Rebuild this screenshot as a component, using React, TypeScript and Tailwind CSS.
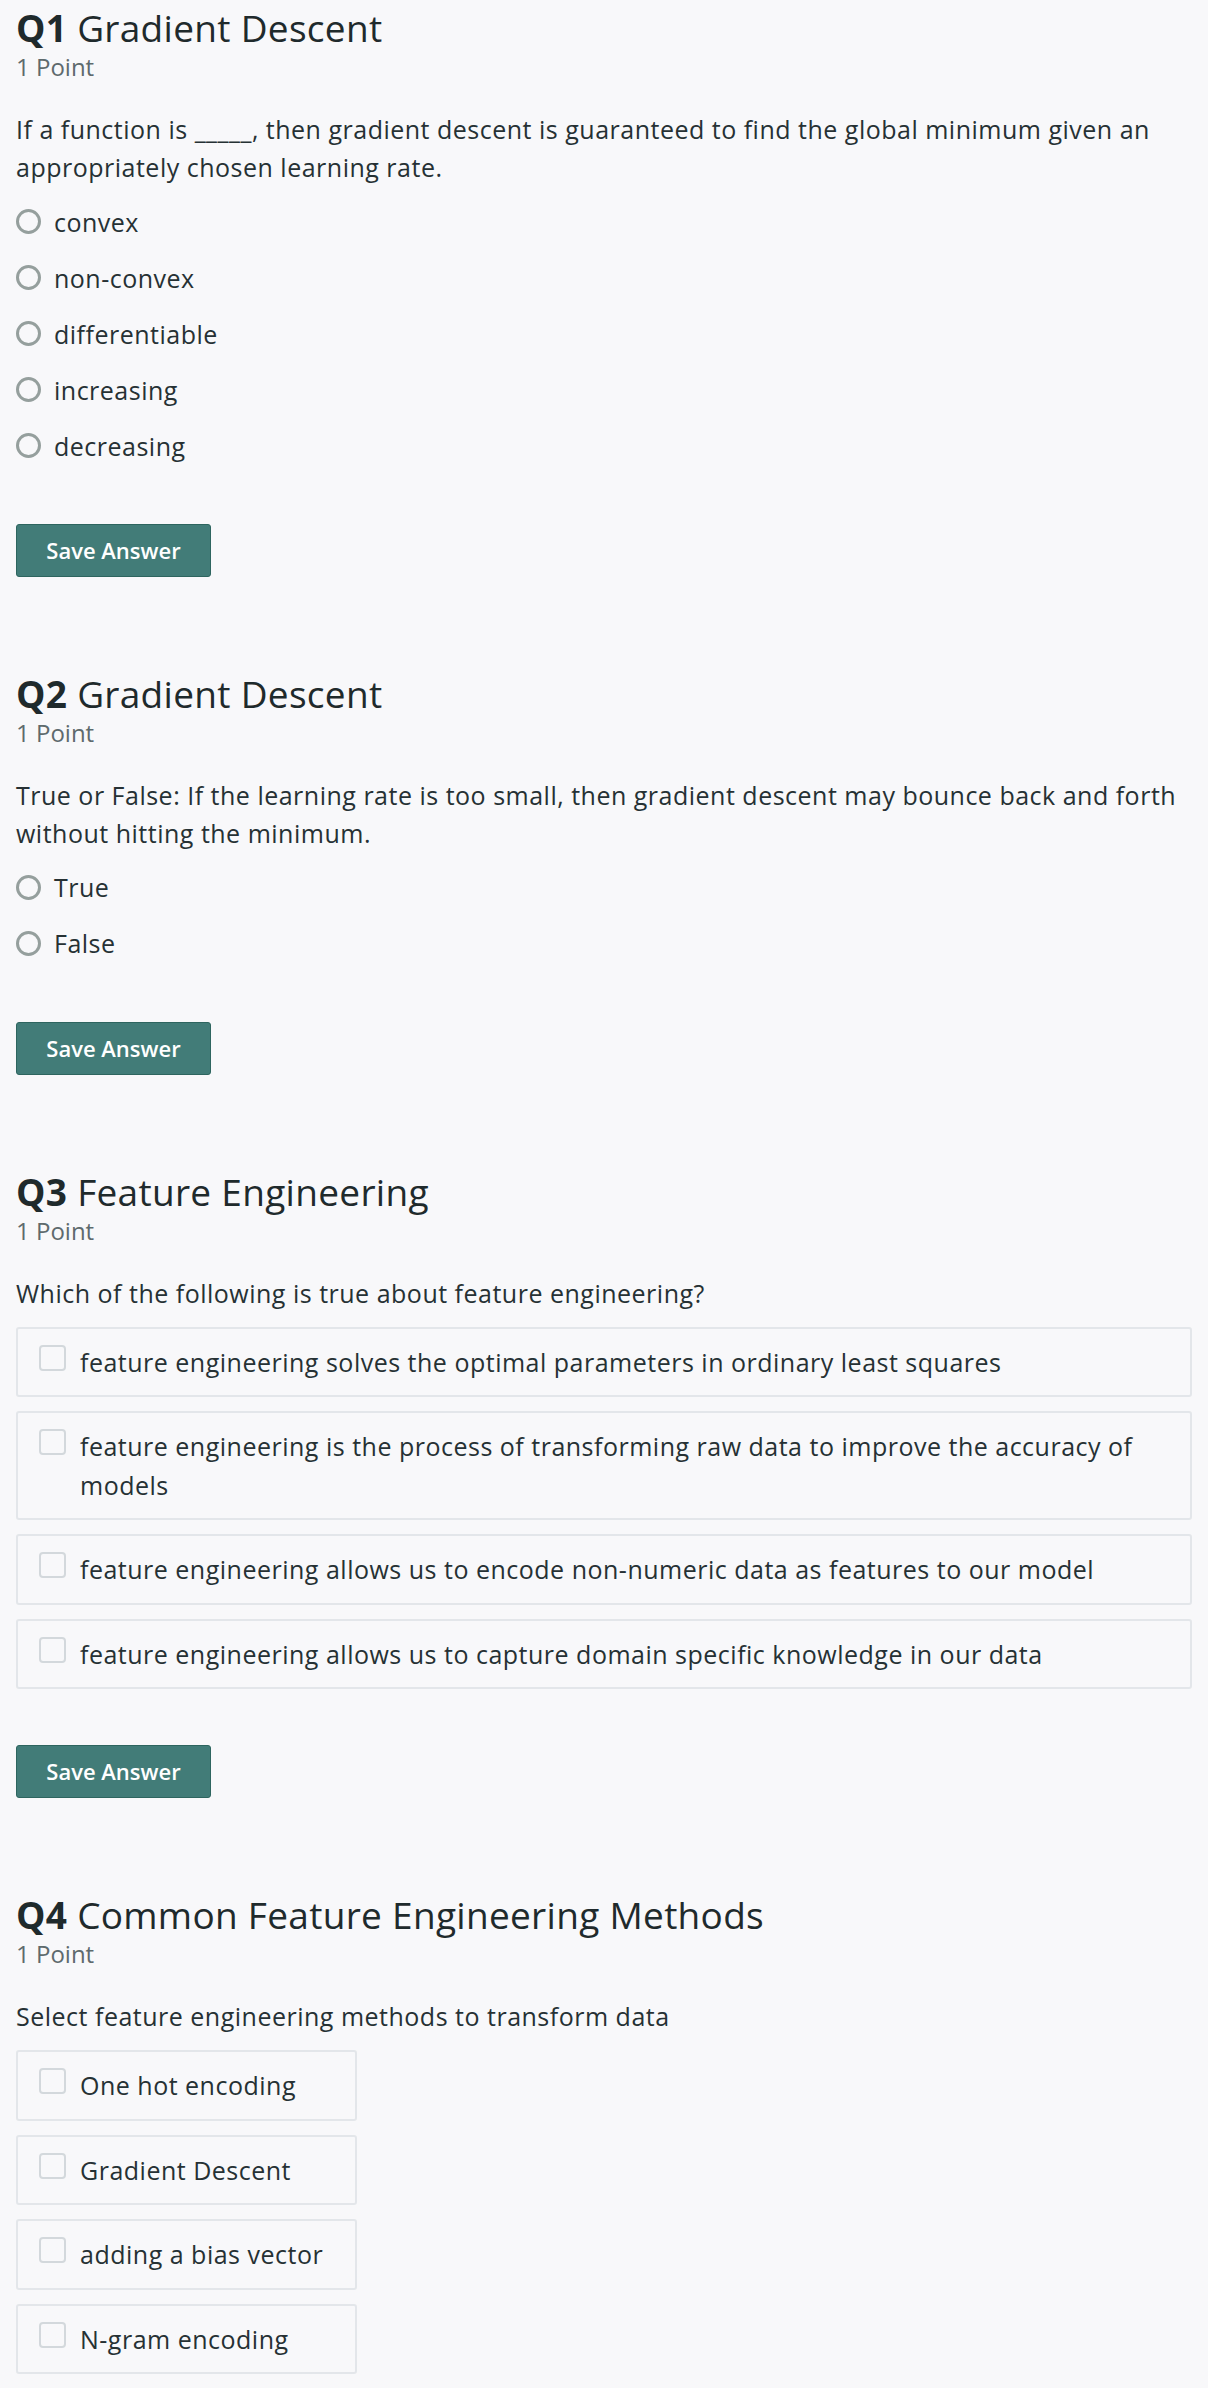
import React from "react";

type Question = {
  num: string;
  title: string;
  prompt: string;
  kind: "radio" | "check";
  options: string[];
  narrow?: boolean;
};

const questions: Question[] = [
  {
    num: "Q1",
    title: "Gradient Descent",
    prompt:
      "If a function is _____, then gradient descent is guaranteed to find the global minimum given an appropriately chosen learning rate.",
    kind: "radio",
    options: ["convex", "non-convex", "differentiable", "increasing", "decreasing"],
  },
  {
    num: "Q2",
    title: "Gradient Descent",
    prompt:
      "True or False: If the learning rate is too small, then gradient descent may bounce back and forth without hitting the minimum.",
    kind: "radio",
    options: ["True", "False"],
  },
  {
    num: "Q3",
    title: "Feature Engineering",
    prompt: "Which of the following is true about feature engineering?",
    kind: "check",
    options: [
      "feature engineering solves the optimal parameters in ordinary least squares",
      "feature engineering is the process of transforming raw data to improve the accuracy of models",
      "feature engineering allows us to encode non-numeric data as features to our model",
      "feature engineering allows us to capture domain specific knowledge in our data",
    ],
  },
  {
    num: "Q4",
    title: "Common Feature Engineering Methods",
    prompt: "Select feature engineering methods to transform data",
    kind: "check",
    narrow: true,
    options: ["One hot encoding", "Gradient Descent", "adding a bias vector", "N-gram encoding"],
  },
];

const RadioOption: React.FC<{ label: string }> = ({ label }) => (
  <label className="flex h-[56px] items-center">
    <span className="h-[25px] w-[25px] shrink-0 rounded-full border-[3px] border-[#959f9d] bg-[#f8f8fa]" />
    <span className="ml-[13px]">{label}</span>
  </label>
);

const CheckOption: React.FC<{ label: string; narrow?: boolean }> = ({ label, narrow }) => (
  <label
    className={`flex items-start rounded-[3px] border-2 border-[#e3e6ea] py-[14px] pl-[21px] pr-5 ${
      narrow ? "w-[341px]" : "w-full"
    }`}
  >
    <span className="mt-[2px] h-[26px] w-[27px] shrink-0 rounded-[4px] border-2 border-[#d3d8dc] bg-[#f8f8fa]" />
    <span className="ml-[14px]">{label}</span>
  </label>
);

const QuestionBlock: React.FC<{ q: Question; first: boolean }> = ({ q, first }) => (
  <section className={first ? "" : "mt-[95px]"}>
    <h2 className="text-[37px] leading-[44px] tracking-[0.3px] text-[#1f2a2c]">
      <span className="font-bold">{q.num}</span> {q.title}
    </h2>
    <div className="mt-[1px] text-[24px] leading-[32px] text-[#5e6a6d]">1 Point</div>
    <p className="mt-[27px] text-[25px] leading-[38.4px] tracking-[0.5px] text-[#263134]">{q.prompt}</p>

    {q.kind === "radio" ? (
      <div className="mt-[7px] flex flex-col text-[25px] leading-[38.4px] tracking-[0.5px] text-[#263134]">
        {q.options.map((o) => (
          <RadioOption key={o} label={o} />
        ))}
      </div>
    ) : (
      <div className="mt-[15px] flex flex-col gap-[14px] text-[25px] leading-[38.4px] tracking-[0.5px] text-[#263134]">
        {q.options.map((o) => (
          <CheckOption key={o} label={o} narrow={q.narrow} />
        ))}
      </div>
    )}

    <button
      className={`${
        q.kind === "radio" ? "mt-[50px]" : "mt-[56px]"
      } flex h-[53px] w-[195px] items-center justify-center rounded-[3px] border border-[#2e655f] bg-[#427c78] text-[22px] font-semibold text-white`}
    >
      Save Answer
    </button>
  </section>
);

export default function App() {
  return (
    <div className="min-h-screen bg-[#f8f8fa] px-4 pt-[6px] pb-4 font-['Open_Sans',sans-serif]">
      {questions.map((q, i) => (
        <QuestionBlock key={q.num} q={q} first={i === 0} />
      ))}
    </div>
  );
}
